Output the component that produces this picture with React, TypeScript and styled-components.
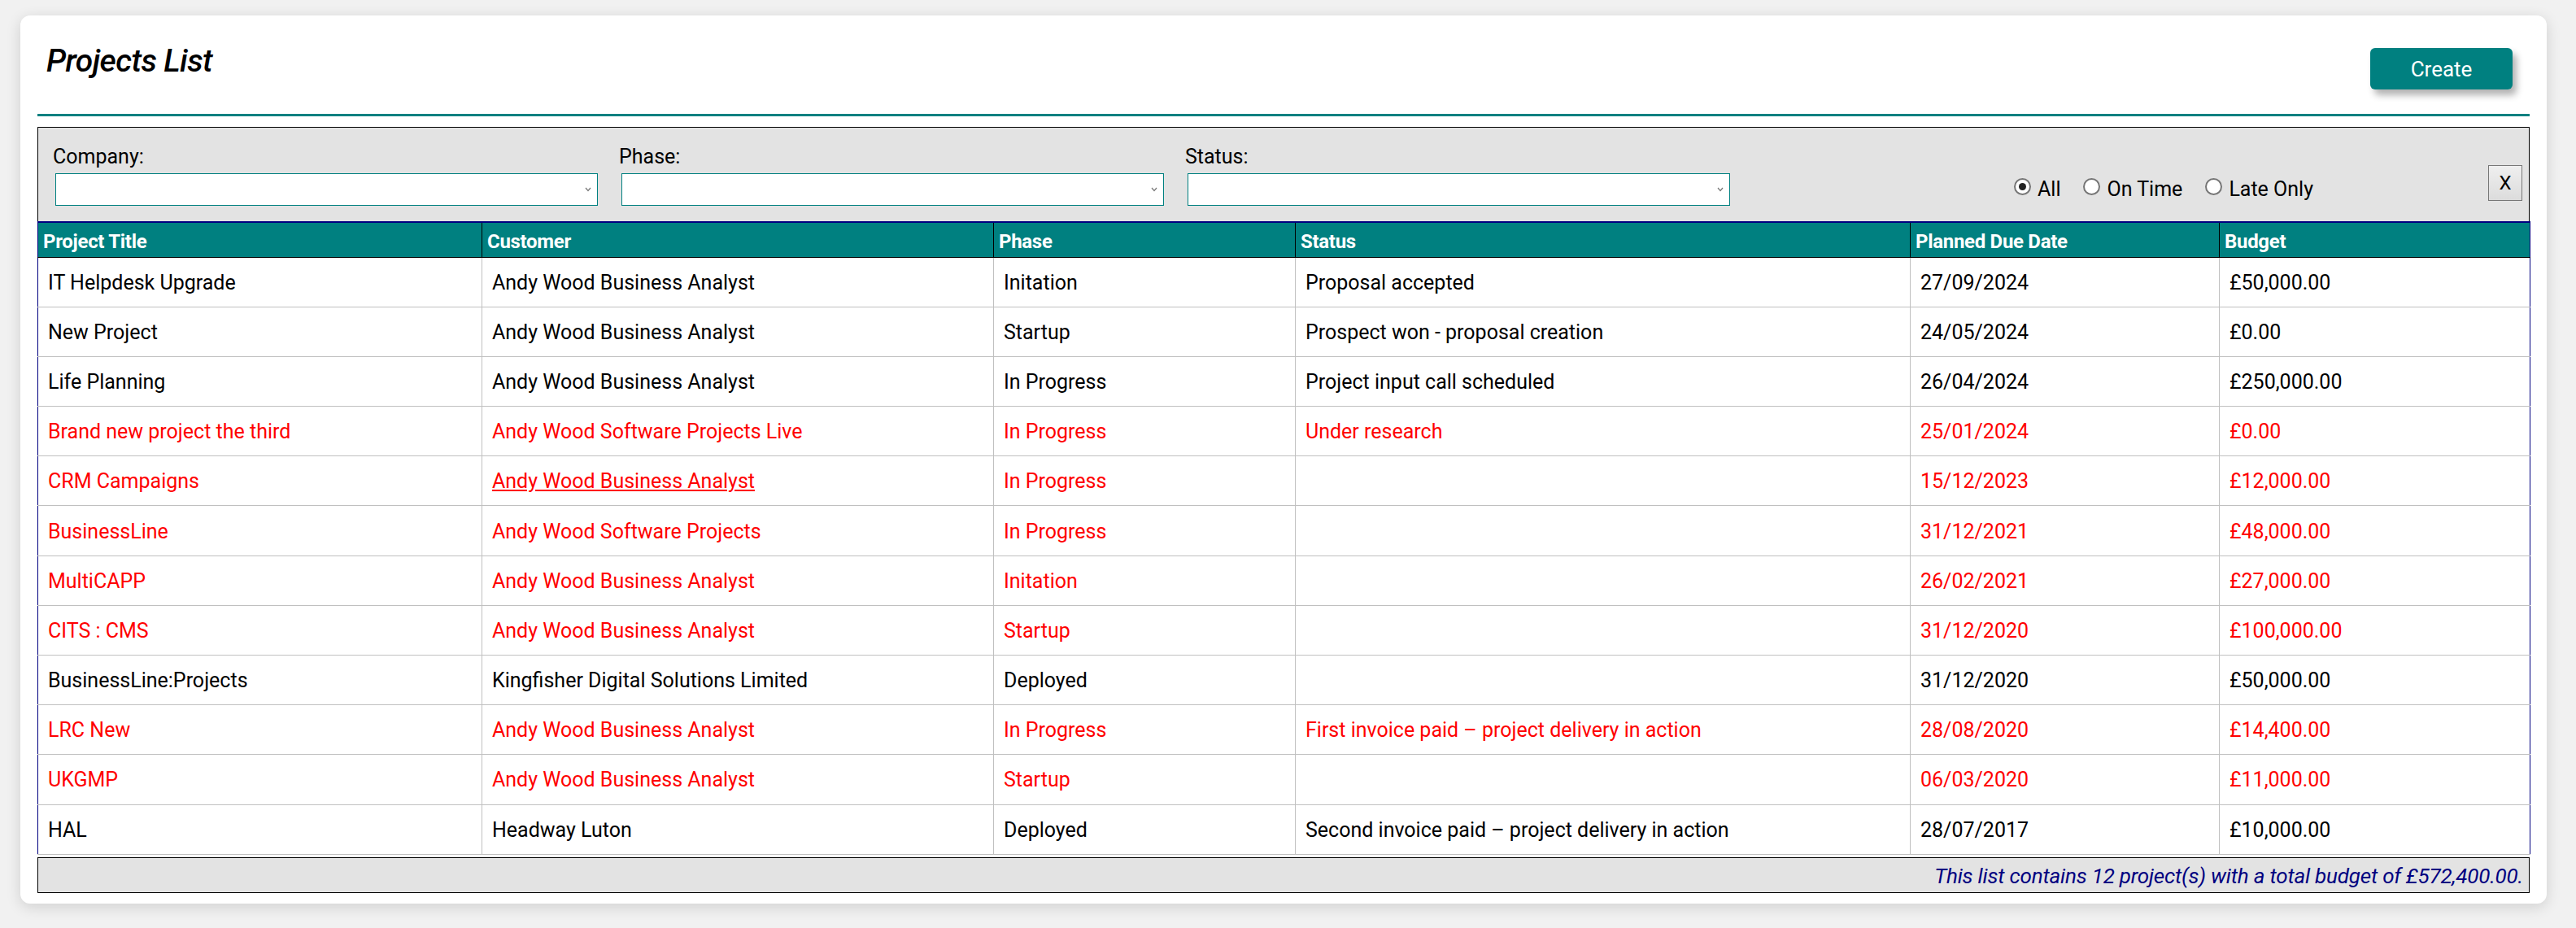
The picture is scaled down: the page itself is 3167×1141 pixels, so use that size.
import React from "react";
import styled, { createGlobalStyle } from "styled-components";

const GlobalStyle = createGlobalStyle`
  html, body { margin: 0; padding: 0; }
  body {
    background: #f1f1f1;
    font-family: Roboto, "Liberation Sans", sans-serif;
    color: #000;
  }
`;

const Card = styled.div`
  margin: 19px 36px 30px 25px;
  background: #fff;
  border-radius: 12px;
  box-shadow: 0 4px 18px rgba(0, 0, 0, 0.14);
  padding: 0 21px 13px 21px;
`;

const Header = styled.div`
  height: 121px;
  box-sizing: border-box;
  padding-top: 40px;
  display: flex;
  justify-content: space-between;
  align-items: flex-start;
`;

const Title = styled.h1`
  margin: -7px 0 0 11px;
  font-size: 39px;
  font-weight: 500;
  font-style: italic;
  line-height: 46px;
  letter-spacing: -0.6px;
`;

const CreateButton = styled.button`
  width: 175px;
  height: 51px;
  margin-right: 21px;
  border: none;
  border-radius: 6px;
  background: #008080;
  color: #fff;
  font-family: inherit;
  font-size: 26px;
  box-shadow: 5px 7px 9px rgba(0, 0, 0, 0.3);
`;

const Divider = styled.div`
  height: 3px;
  background: #008080;
  margin-bottom: 13px;
`;

const FilterPanel = styled.div`
  height: 116px;
  box-sizing: border-box;
  border: 1px solid #000;
  border-bottom: none;
  background: #e3e3e3;
  padding: 20px 8px 19px 18px;
  display: flex;
  align-items: flex-end;
`;

const Fields = styled.div`
  display: flex;
  gap: 26px;
`;

const Field = styled.div`
  width: 670px;
  display: flex;
  flex-direction: column;
  gap: 5px;
`;

const Label = styled.label`
  font-size: 25px;
  line-height: 30px;
`;

const SelectWrap = styled.div`
  position: relative;
  margin-left: 3px;
  height: 40px;
`;

const Select = styled.select`
  appearance: none;
  width: 100%;
  height: 40px;
  box-sizing: border-box;
  border: 1px solid #008080;
  background: #fff;
  font-family: inherit;
  font-size: 24px;
  outline: none;
`;

const Chevron = styled.svg`
  position: absolute;
  right: 8px;
  top: 17px;
  pointer-events: none;
`;

const RadioGroup = styled.div`
  display: flex;
  gap: 28px;
  margin-left: 349px;
  margin-bottom: 5px;
`;

const RadioItem = styled.label`
  display: flex;
  align-items: flex-start;
  gap: 8px;
  font-size: 25px;
  line-height: 30px;
`;

const RadioCircle = styled.span<{ $checked?: boolean }>`
  width: 21px;
  height: 21px;
  box-sizing: border-box;
  border-radius: 50%;
  border: 2px solid #767676;
  background: #fff;
  display: flex;
  align-items: center;
  justify-content: center;
  margin-top: 1px;
  &::after {
    content: "";
    width: 9px;
    height: 9px;
    border-radius: 50%;
    background: ${(p) => (p.$checked ? "#222" : "transparent")};
  }
`;

const ClearButton = styled.button`
  margin-left: auto;
  margin-bottom: 6px;
  width: 42px;
  height: 44px;
  border: 1px solid #777;
  background: linear-gradient(#efefef, #dcdcdc);
  font-family: inherit;
  font-size: 24px;
  padding: 0;
  color: #000;
`;

const Table = styled.table`
  width: 100%;
  table-layout: fixed;
  border-collapse: collapse;
  border: 1px solid #000080;
  border-top: 2px solid #000080;
`;

const HeadCell = styled.th`
  background: #008080;
  color: #fff;
  text-align: left;
  font-size: 24px;
  font-weight: 700;
  height: 43px;
  padding: 4px 5px 0 6px;
  box-sizing: border-box;
  border-right: 1px solid #000;
  border-bottom: 1px solid #000;
  letter-spacing: -0.3px;
  &:last-child { border-right: none; }
`;

const Row = styled.tr<{ $late?: boolean }>`
  color: ${(p) => (p.$late ? "#ff0000" : "#000")};
`;

const Cell = styled.td<{ $underline?: boolean }>`
  height: 61.2px;
  box-sizing: border-box;
  padding: 1px 12px 0;
  font-size: 25px;
  border-right: 1px solid #c0c0c0;
  border-bottom: 1px solid #c0c0c0;
  white-space: nowrap;
  overflow: hidden;
  text-decoration: ${(p) => (p.$underline ? "underline" : "none")};
  &:last-child { border-right: none; }
`;

const Footer = styled.div`
  margin-top: 3px;
  height: 44px;
  box-sizing: border-box;
  border: 1px solid #000;
  background: #e3e3e3;
  display: flex;
  align-items: center;
  justify-content: flex-end;
  padding: 2px 7px 0;
  font-size: 26px;
  font-style: italic;
  color: #000080;
  letter-spacing: -0.2px;
`;

type Project = {
  title: string;
  customer: string;
  phase: string;
  status: string;
  due: string;
  budget: string;
  late?: boolean;
  underline?: boolean;
};

const projects: Project[] = [
  { title: "IT Helpdesk Upgrade", customer: "Andy Wood Business Analyst", phase: "Initation", status: "Proposal accepted", due: "27/09/2024", budget: "£50,000.00" },
  { title: "New Project", customer: "Andy Wood Business Analyst", phase: "Startup", status: "Prospect won - proposal creation", due: "24/05/2024", budget: "£0.00" },
  { title: "Life Planning", customer: "Andy Wood Business Analyst", phase: "In Progress", status: "Project input call scheduled", due: "26/04/2024", budget: "£250,000.00" },
  { title: "Brand new project the third", customer: "Andy Wood Software Projects Live", phase: "In Progress", status: "Under research", due: "25/01/2024", budget: "£0.00", late: true },
  { title: "CRM Campaigns", customer: "Andy Wood Business Analyst", phase: "In Progress", status: "", due: "15/12/2023", budget: "£12,000.00", late: true, underline: true },
  { title: "BusinessLine", customer: "Andy Wood Software Projects", phase: "In Progress", status: "", due: "31/12/2021", budget: "£48,000.00", late: true },
  { title: "MultiCAPP", customer: "Andy Wood Business Analyst", phase: "Initation", status: "", due: "26/02/2021", budget: "£27,000.00", late: true },
  { title: "CITS : CMS", customer: "Andy Wood Business Analyst", phase: "Startup", status: "", due: "31/12/2020", budget: "£100,000.00", late: true },
  { title: "BusinessLine:Projects", customer: "Kingfisher Digital Solutions Limited", phase: "Deployed", status: "", due: "31/12/2020", budget: "£50,000.00" },
  { title: "LRC New", customer: "Andy Wood Business Analyst", phase: "In Progress", status: "First invoice paid – project delivery in action", due: "28/08/2020", budget: "£14,400.00", late: true },
  { title: "UKGMP", customer: "Andy Wood Business Analyst", phase: "Startup", status: "", due: "06/03/2020", budget: "£11,000.00", late: true },
  { title: "HAL", customer: "Headway Luton", phase: "Deployed", status: "Second invoice paid – project delivery in action", due: "28/07/2017", budget: "£10,000.00" },
];

const columns = [
  { label: "Project Title", width: 546 },
  { label: "Customer", width: 629 },
  { label: "Phase", width: 371 },
  { label: "Status", width: 756 },
  { label: "Planned Due Date", width: 380 },
  { label: "Budget", width: 382 },
];

const SelectField = ({ label }: { label: string }) => (
  <Field>
    <Label>{label}</Label>
    <SelectWrap>
      <Select defaultValue="">
        <option value=""></option>
      </Select>
      <Chevron width="8" height="6" viewBox="0 0 8 6">
        <path d="M1 1 L4 4.5 L7 1" fill="none" stroke="#777" strokeWidth="1.2" />
      </Chevron>
    </SelectWrap>
  </Field>
);

export default function App() {
  return (
    <>
      <GlobalStyle />
      <Card>
        <Header>
          <Title>Projects List</Title>
          <CreateButton>Create</CreateButton>
        </Header>
        <Divider />
        <FilterPanel>
          <Fields>
            <SelectField label="Company:" />
            <SelectField label="Phase:" />
            <SelectField label="Status:" />
          </Fields>
          <RadioGroup>
            <RadioItem>
              <RadioCircle $checked />
              All
            </RadioItem>
            <RadioItem>
              <RadioCircle />
              On Time
            </RadioItem>
            <RadioItem>
              <RadioCircle />
              Late Only
            </RadioItem>
          </RadioGroup>
          <ClearButton>X</ClearButton>
        </FilterPanel>
        <Table>
          <colgroup>
            {columns.map((c) => (
              <col key={c.label} style={{ width: c.width }} />
            ))}
          </colgroup>
          <thead>
            <tr>
              {columns.map((c) => (
                <HeadCell key={c.label}>{c.label}</HeadCell>
              ))}
            </tr>
          </thead>
          <tbody>
            {projects.map((p, i) => (
              <Row key={i} $late={p.late}>
                <Cell>{p.title}</Cell>
                <Cell $underline={p.underline}>{p.customer}</Cell>
                <Cell>{p.phase}</Cell>
                <Cell>{p.status}</Cell>
                <Cell>{p.due}</Cell>
                <Cell>{p.budget}</Cell>
              </Row>
            ))}
          </tbody>
        </Table>
        <Footer>This list contains 12 project(s) with a total budget of £572,400.00.</Footer>
      </Card>
    </>
  );
}
